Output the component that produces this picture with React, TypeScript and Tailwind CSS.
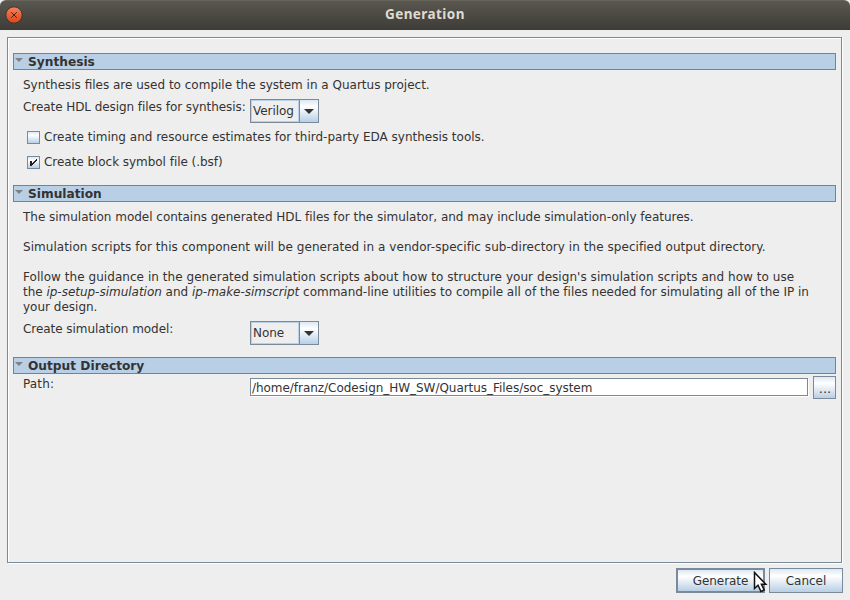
import React from "react";

function Section({ title, children, className }: { title: string; children: React.ReactNode; className: string }) {
  return (
    <section className={"flex flex-col " + className}>
      <h2 className="flex h-[17px] shrink-0 border border-[#7a8288] bg-[#b8cfe5] font-bold leading-[15px]">
        <svg className="ml-px mt-1 h-1 w-2 shrink-0" viewBox="0 0 8 4">
          <path d="M0 0H8L4 4Z" fill="#808080" />
        </svg>
        <span className="ml-[5px] text-[12.2px] leading-[16px]">{title}</span>
      </h2>
      <div className="pl-[10px]">{children}</div>
    </section>
  );
}

function Combo({ value }: { value: string }) {
  return (
    <div className="flex h-6 w-[69px] border border-[#7a8a99]">
      <div className="w-12 border border-[#b8cfe5] pl-px leading-[21px] tracking-[-0.04px]">{value}</div>
      <div className="flex w-[19px] justify-center border-l border-[#7a8a99] bg-linear-to-b from-[#dde8f3] via-white via-30% to-[#b8cfe5] pt-[9px]">
        <svg className="h-[5px] w-[10px]" viewBox="0 0 10 5">
          <path d="M0 0H10L5 5Z" fill="#333" />
        </svg>
      </div>
    </div>
  );
}

function Check({ label, checked = false }: { label: string; checked?: boolean }) {
  return (
    <div className="flex h-[15px] items-center pl-1 leading-[15px]">
      <div className="h-[13px] w-[13px] border border-[#7a8a99] bg-linear-to-b from-[#dde8f3] via-white via-30% to-[#b8cfe5]">
        {checked && (
          <svg className="h-[11px] w-[11px]" viewBox="0 0 11 11" shapeRendering="crispEdges">
            <path d="M2 4h2v2h1v-1h1v-1h1v-1h1v-1h1v2h-1v1h-1v1h-1v1h-1v1h-1v1h-2z" fill="#222" />
          </svg>
        )}
      </div>
      <span className={checked ? "ml-1 tracking-[-0.04px]" : "ml-1"}>{label}</span>
    </div>
  );
}

const line = "h-[15px] whitespace-nowrap";

export default function App() {
  return (
    <div className="relative flex h-[600px] w-[850px] flex-col overflow-hidden bg-[#eeeeee] font-['DejaVu_Sans',sans-serif] text-[12px] leading-[15px] text-[#333333]">
      <header className="flex h-[30px] shrink-0 items-start rounded-t-[6px] border-t border-[#67645c] bg-linear-to-b from-[#5a574f] to-[#3d3c37]">
        <svg className="ml-[5px] mt-[5px] h-[18px] w-[18px]" viewBox="0 0 18 18">
          <defs>
            <linearGradient id="close" x1="0" y1="0" x2="0" y2="1">
              <stop stopColor="#f38563" />
              <stop offset="0.5" stopColor="#ea6137" />
              <stop offset="1" stopColor="#df4817" />
            </linearGradient>
          </defs>
          <circle cx="9" cy="9" r="8.2" fill="url(#close)" stroke="#383630" />
          <path d="M6.2 6.2l5.6 5.6m0-5.6l-5.6 5.6" stroke="#42261b" strokeWidth="1" />
        </svg>
        <h1 className="ml-[362px] mt-[5px] font-['Noto_Sans',sans-serif] text-[13.5px] font-bold leading-4 tracking-[0.42px] text-[#dfdbd2]">Generation</h1>
      </header>

      <main className="ml-[7px] mt-[7px] flex h-[526px] w-[835px] flex-col border border-[#7a8a99] pl-[5px] pr-[5px] pt-[15px] shadow-[1px_1px_0_white,inset_1px_1px_0_white]">
        <Section title="Synthesis" className="h-[132px]">
          <p className={"mt-2 " + line}>Synthesis files are used to compile the system in a Quartus project.</p>
          <div className="mt-[6px] flex h-[25px]">
            <span className="mt-px w-[227px] whitespace-nowrap tracking-[-0.07px]">Create HDL design files for synthesis:</span>
            <Combo value="Verilog" />
          </div>
          <div className="mt-[6px]">
            <Check label="Create timing and resource estimates for third-party EDA synthesis tools." />
          </div>
          <div className="mt-[10px]">
            <Check label="Create block symbol file (.bsf)" checked />
          </div>
        </Section>

        <Section title="Simulation" className="h-[172px]">
          <p className={"mt-2 tracking-[-0.018px] " + line}>The simulation model contains generated HDL files for the simulator, and may include simulation-only features.</p>
          <p className={"mt-[15px] tracking-[0.052px] " + line}>Simulation scripts for this component will be generated in a vendor-specific sub-directory in the specified output directory.</p>
          <p className="mt-[15px] whitespace-nowrap">
            <span className="tracking-[0.05px]">Follow the guidance in the generated simulation scripts about how to structure your design's simulation scripts and how to use</span>
            <br />
            <span className="tracking-[-0.02px]">
              the <i>ip-setup-simulation</i> and <i>ip-make-simscript</i> command-line utilities to compile all of the files needed for simulating all of the IP in
            </span>
            <br />
            your design.
          </p>
          <div className="mt-[6px] flex">
            <span className="mt-px w-[227px] tracking-[-0.05px]">Create simulation model:</span>
            <Combo value="None" />
          </div>
        </Section>

        <Section title="Output Directory" className="">
          <div className="mt-[2px] flex">
            <span className="mt-px w-[227px] shrink-0 tracking-[0.15px]">Path:</span>
            <div className="mt-[2px] h-[18px] w-[558px] shrink-0 border border-[#7a8a99] bg-white pl-px leading-[18px] tracking-[-0.04px] shadow-[1px_1px_0_white]">
              /home/franz/Codesign_HW_SW/Quartus_Files/soc_system
            </div>
            <button className="ml-[5px] h-[23px] w-[23px] shrink-0 border border-[#7a8a99] bg-linear-to-b from-[#dde8f3] via-white via-30% to-[#b8cfe5] pl-px text-[13px] leading-[23px]">...</button>
          </div>
        </Section>
      </main>

      <footer className="mt-[5px] flex gap-1 pl-[676px]">
        <button className="h-[25px] w-[89px] border-2 border-[#7a8a99] bg-linear-to-b from-[#dde8f3] via-white via-30% to-[#b8cfe5] leading-[22px] tracking-[-0.04px]">Generate</button>
        <button className="h-[25px] w-[74px] border border-[#7a8a99] bg-linear-to-b from-[#dde8f3] via-white via-30% to-[#b8cfe5] leading-[24px]">Cancel</button>
      </footer>
      <svg className="absolute left-[753px] top-[571px] h-[22px] w-[15px]" viewBox="0 0 15 22">
        <path d="M1.5 1.5V17.5L5 14.2L8 20.5L11.2 19L8.4 13.2H12.8Z" fill="white" stroke="#111" strokeWidth="1.5" />
      </svg>
    </div>
  );
}
